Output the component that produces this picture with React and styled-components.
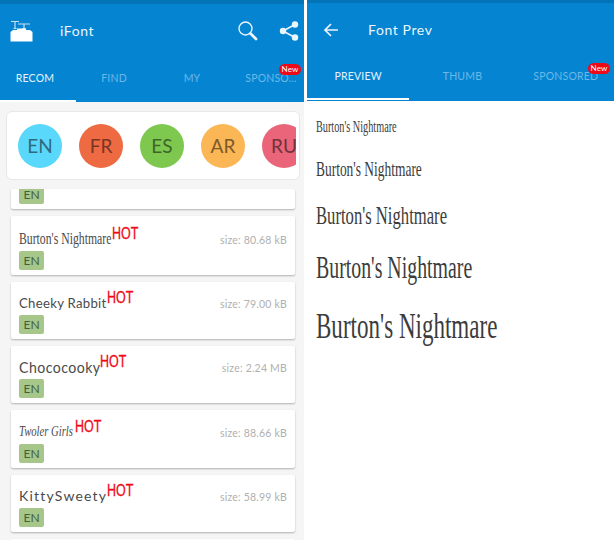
import React from "react";
import styled, { createGlobalStyle } from "styled-components";

const GlobalStyle = createGlobalStyle`
  html, body {
    margin: 0;
    padding: 0;
    background: #fff;
  }
  body {
    font-family: "Lato", "Noto Sans", sans-serif;
  }
`;

const Page = styled.div`
  width: 614px;
  height: 540px;
  display: flex;
  justify-content: space-between;
  overflow: hidden;
  background: #fff;
`;

const Screen = styled.div`
  width: ${(p) => p.$width}px;
  height: 540px;
  display: flex;
  flex-direction: column;
  overflow: hidden;
  background: ${(p) => p.$bg};
`;

const AppBar = styled.div`
  height: ${(p) => p.$height}px;
  flex: none;
  display: flex;
  flex-direction: column;
  background: #0584d2;
  border-top: ${(p) => p.$status}px solid #0474b8;
  padding-bottom: ${(p) => p.$pad || 0}px;
  box-sizing: border-box;
`;

const Toolbar = styled.div`
  height: 53px;
  flex: none;
  display: flex;
  align-items: center;
  padding: 0 5px 2px 10px;
  color: #eaf5fc;
`;

const Title = styled.div`
  font-size: 14px;
  letter-spacing: 0.6px;
  margin-left: ${(p) => p.$left}px;
  flex: 1;
`;

const ToolIcon = styled.svg`
  display: block;
  flex: none;
  margin-left: ${(p) => p.$left || 0}px;
`;

const Tabs = styled.div`
  flex: 1;
  display: grid;
  grid-auto-flow: column;
  grid-auto-columns: 1fr;
`;

const Tab = styled.div`
  position: relative;
  box-sizing: border-box;
  min-width: 0;
  display: flex;
  align-items: center;
  justify-content: center;
  font-size: 10.5px;
  letter-spacing: 0.2px;
  white-space: nowrap;
  padding-bottom: 4px;
  padding-left: ${(p) => (p.$shift > 0 ? p.$shift * 2 : 0)}px;
  padding-right: ${(p) => (p.$shift < 0 ? -p.$shift * 2 : 0)}px;
  color: ${(p) => (p.$active ? "#e6f3fb" : "#6cb8e6")};
  border-bottom: 2px solid ${(p) => (p.$active ? "#fff" : "transparent")};
`;

const NewBadge = styled.span`
  position: absolute;
  top: 5px;
  right: ${(p) => p.$right}px;
  width: 22px;
  height: 11px;
  border-radius: 6px;
  background: #ee0a17;
  color: #fff;
  font-size: 8px;
  line-height: 11px;
  text-align: center;
`;

const LangCard = styled.div`
  margin: 9px 4px 0 6px;
  height: 69px;
  box-sizing: border-box;
  padding: 0 3px 0 11px;
  display: flex;
  align-items: center;
  flex: none;
  background: #fff;
  border: 1px solid #e8e8e8;
  border-radius: 6px;
`;

const LangRow = styled.div`
  flex: 1;
  display: flex;
  gap: 17px;
  overflow: hidden;
`;

const LangCircle = styled.div`
  width: 44px;
  height: 44px;
  flex: none;
  border-radius: 50%;
  display: flex;
  align-items: center;
  justify-content: center;
  font-size: 19px;
  background: ${(p) => p.$bg};
  color: ${(p) => p.$fg};
`;

const List = styled.div`
  margin: 9px 9px 0 11px;
  display: flex;
  flex-direction: column;
  gap: 7px;
`;

const FontCard = styled.div`
  height: ${(p) => p.$height}px;
  flex: none;
  box-sizing: border-box;
  padding: 0 8px 5px 8px;
  display: flex;
  align-items: flex-end;
  justify-content: space-between;
  overflow: hidden;
  background: #fff;
  border-radius: 2px;
  box-shadow: 0 1px 2px rgba(0, 0, 0, 0.28);
`;

const CardMain = styled.div`
  display: flex;
  flex-direction: column;
  gap: 4px;
`;

const NameRow = styled.div`
  display: flex;
  align-items: flex-start;
`;

const FontName = styled.span`
  display: block;
  width: ${(p) => p.$width}px;
  font-family: ${(p) => p.$family};
  font-size: ${(p) => p.$size}px;
  font-style: ${(p) => (p.$italic ? "italic" : "normal")};
  letter-spacing: ${(p) => p.$spacing || 0}px;
  color: #4a4a4a;
  margin-top: 7px;
  line-height: 16px;
  white-space: nowrap;
  transform: scaleX(${(p) => p.$scale || 1});
  transform-origin: left center;
`;

const Hot = styled.span`
  font-family: "Liberation Sans", sans-serif;
  font-size: 16px;
  line-height: 14px;
  margin-top: 3px;
  color: #ee0a17;
  -webkit-text-stroke: 0.3px #ee0a17;
  transform: scaleX(0.78);
  transform-origin: left center;
`;

const Chip = styled.span`
  width: 25px;
  height: 19px;
  border-radius: 2px;
  background: #a6c68a;
  color: #44603a;
  font-size: 12px;
  line-height: 19px;
  text-align: center;
`;

const Size = styled.span`
  font-size: 10.5px;
  letter-spacing: 0.2px;
  line-height: 12px;
  color: #b0b0b0;
  margin-bottom: 24px;
`;

const PreviewList = styled.div`
  display: flex;
  flex-direction: column;
  padding: 16px 0 0 9px;
  gap: 18px;
`;

const PreviewLine = styled.div`
  font-family: "Liberation Serif", serif;
  font-size: ${(p) => p.$size}px;
  line-height: ${(p) => p.$height}px;
  color: #3c3c3c;
  white-space: nowrap;
  transform: scaleX(0.64);
  transform-origin: left center;
`;

const languages = [
  { code: "EN", bg: "#5ad8fb", fg: "#2f6b80" },
  { code: "FR", bg: "#ee6a43", fg: "#7a3524" },
  { code: "ES", bg: "#7ec850", fg: "#3d6628" },
  { code: "AR", bg: "#fbb655", fg: "#7c5a2a" },
  { code: "RU", bg: "#ea6579", fg: "#73323c" },
];

const fonts = [
  { name: "Burton's Nightmare", family: '"Liberation Serif", serif', size: 17, width: 93, scale: 0.69, fileSize: "80.68 kB", height: 59 },
  { name: "Cheeky Rabbit", family: '"Lato", sans-serif', size: 14, width: 88, scale: 0.94, spacing: 0.3, fileSize: "79.00 kB", height: 57 },
  { name: "Chococooky", family: '"Lato", sans-serif', size: 15, width: 81, scale: 0.94, spacing: 0.5, fileSize: "2.24 MB", height: 57 },
  { name: "Twoler Girls", family: '"Liberation Serif", serif', size: 14, width: 56, scale: 0.76, italic: true, fileSize: "88.66 kB", height: 58 },
  { name: "KittySweety", family: '"Lato", sans-serif', size: 14, width: 88, scale: 1, spacing: 1.2, fileSize: "58.99 kB", height: 57 },
];

const previews = [
  { size: 16, height: 20 },
  { size: 21, height: 28 },
  { size: 26, height: 30 },
  { size: 31, height: 38 },
  { size: 36, height: 42 },
];

const AppLogo = () => (
  <svg width="23" height="22" viewBox="0 0 23 22">
    <path d="M1 1.5h8M5 1.5v7M3.5 8.5h3M8 4h12M14 4v5M12.5 8.5h3" stroke="#c3dff2" strokeWidth="1.2" fill="none" />
    <path d="M7 8.5h9v1.5h4l2.5 2v9.5H0.5V12l2.5-2h4z" fill="#fff" />
  </svg>
);

const SearchIcon = () => (
  <ToolIcon width="20" height="20" viewBox="0 0 20 20" fill="none" stroke="#eaf5fc">
    <circle cx="7.5" cy="7.5" r="6.5" strokeWidth="1.4" />
    <path d="M12.5 12.5l5.5 5.5" strokeWidth="2.8" strokeLinecap="round" />
  </ToolIcon>
);

const ShareIcon = () => (
  <ToolIcon $left={21} width="20" height="20" viewBox="0 0 20 20" fill="#eaf5fc" stroke="#eaf5fc">
    <path d="M4 10L16 3.5M4 10l12 6.5" strokeWidth="1.5" />
    <circle cx="4" cy="10" r="3.2" stroke="none" />
    <circle cx="16" cy="3.5" r="3.2" stroke="none" />
    <circle cx="16" cy="16.5" r="3.2" stroke="none" />
  </ToolIcon>
);

const BackIcon = () => (
  <ToolIcon $left={6} width="16" height="16" viewBox="0 0 16 16" fill="none" stroke="#eaf5fc" strokeWidth="1.7">
    <path d="M15 8H2M8 2L2 8l6 6" />
  </ToolIcon>
);

export default function App() {
  return (
    <Page>
      <GlobalStyle />
      <Screen $width={304} $bg="#f5f5f5">
        <AppBar $height={102} $status={4}>
          <Toolbar>
            <AppLogo />
            <Title $left={27}>iFont</Title>
            <SearchIcon />
            <ShareIcon />
          </Toolbar>
          <Tabs>
            <Tab $active $shift={-3}>RECOM</Tab>
            <Tab>FIND</Tab>
            <Tab $shift={2}>MY</Tab>
            <Tab $shift={5}>
              SPONSO...
              <NewBadge $right={3}>New</NewBadge>
            </Tab>
          </Tabs>
        </AppBar>
        <LangCard>
          <LangRow>
            {languages.map((l) => (
              <LangCircle key={l.code} $bg={l.bg} $fg={l.fg}>
                {l.code}
              </LangCircle>
            ))}
          </LangRow>
        </LangCard>
        <List>
          <FontCard $height={20}>
            <Chip>EN</Chip>
          </FontCard>
          {fonts.map((f) => (
            <FontCard key={f.name} $height={f.height}>
              <CardMain>
                <NameRow>
                  <FontName
                    $family={f.family}
                    $size={f.size}
                    $width={f.width}
                    $scale={f.scale}
                    $spacing={f.spacing}
                    $italic={f.italic}
                  >
                    {f.name}
                  </FontName>
                  <Hot>HOT</Hot>
                </NameRow>
                <Chip>EN</Chip>
              </CardMain>
              <Size>size: {f.fileSize}</Size>
            </FontCard>
          ))}
          <FontCard $height={20} />
        </List>
      </Screen>
      <Screen $width={307} $bg="#fff">
        <AppBar $height={101} $status={3} $pad={1}>
          <Toolbar>
            <BackIcon />
            <Title $left={29}>Font Prev</Title>
          </Toolbar>
          <Tabs>
            <Tab $active>PREVIEW</Tab>
            <Tab $shift={2}>THUMB</Tab>
            <Tab $shift={3}>
              SPONSORED
              <NewBadge $right={4}>New</NewBadge>
            </Tab>
          </Tabs>
        </AppBar>
        <PreviewList>
          {previews.map((p) => (
            <PreviewLine key={p.size} $size={p.size} $height={p.height}>
              Burton's Nightmare
            </PreviewLine>
          ))}
        </PreviewList>
      </Screen>
    </Page>
  );
}
